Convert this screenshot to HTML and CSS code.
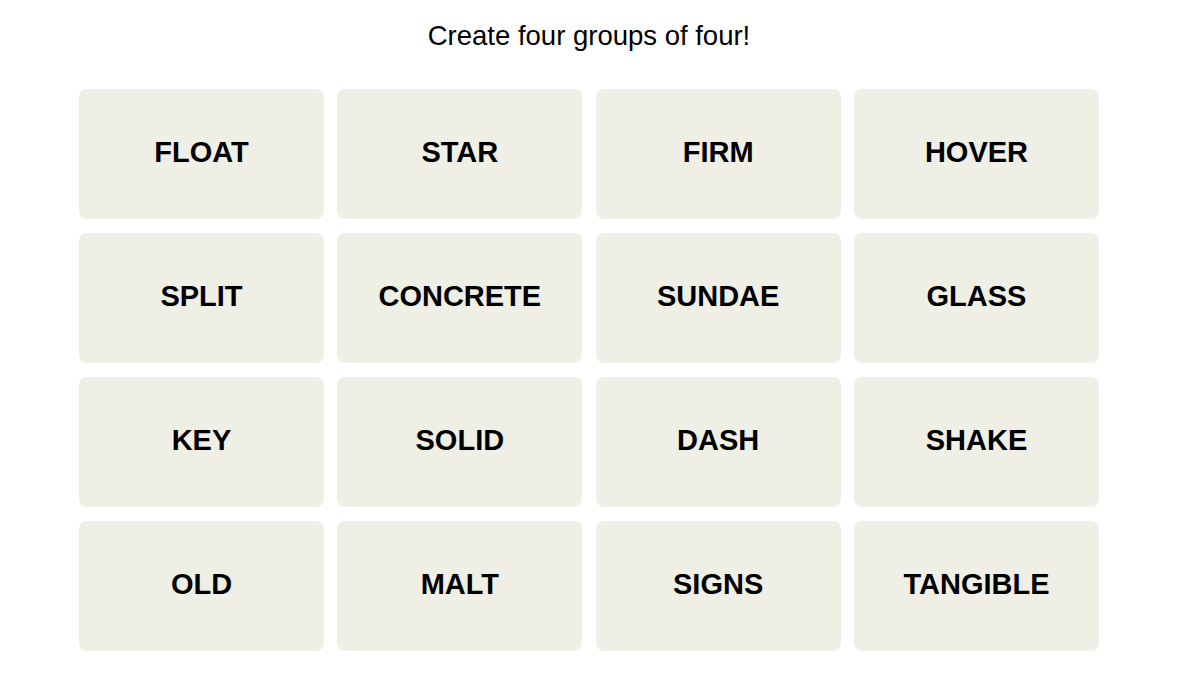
FILE: index.html
```html
<!DOCTYPE html>
<html lang="en">
<head>
    <meta charset="UTF-8">
    <meta name="viewport" content="width=device-width, initial-scale=1.0">
    <title>Connections</title>
    <link rel="stylesheet" href="styles.css">
</head>
<body>
    <div class="juego">
        <p class="titulo">Create four groups of four!</p>
        <div class="tablero">
            <button class="carta">FLOAT</button>
            <button class="carta">STAR</button>
            <button class="carta">FIRM</button>
            <button class="carta">HOVER</button>

            <button class="carta">SPLIT</button>
            <button class="carta">CONCRETE</button>
            <button class="carta">SUNDAE</button>
            <button class="carta">GLASS</button>

            <button class="carta">KEY</button>
            <button class="carta">SOLID</button>
            <button class="carta">DASH</button>
            <button class="carta">SHAKE</button>

            <button class="carta">OLD</button>
            <button class="carta">MALT</button>
            <button class="carta">SIGNS</button>
            <button class="carta">TANGIBLE</button>
        </div>
    </div>
</body>
</html>
```

FILE: styles.css
```css
body {
    margin: 0;
    background-color: #FFFFFF;
    font-family: "Liberation Sans", Arial, sans-serif;
    color: #000000;
}
.juego {
    width: 1020px;
    margin-left: 79px;
    padding-top: 20px;
}
.titulo {
    margin: 0 0 37px 0;
    font-size: 27.5px;
    line-height: 32px;
    text-align: center;
}
.tablero {
    display: grid;
    grid-template-columns: repeat(4, 1fr);
    grid-auto-rows: 130px;
    row-gap: 14px;
    column-gap: 13.33px;
}
.carta {
    display: flex;
    align-items: center;
    justify-content: center;
    padding: 0 0 3px 0;
    background-color: #EFEFE6;
    color: #000000;
    border: none;
    border-radius: 8px;
    font-family: "Liberation Sans", Arial, sans-serif;
    font-weight: bold;
    font-size: 29px;
    cursor: pointer;
}
```
